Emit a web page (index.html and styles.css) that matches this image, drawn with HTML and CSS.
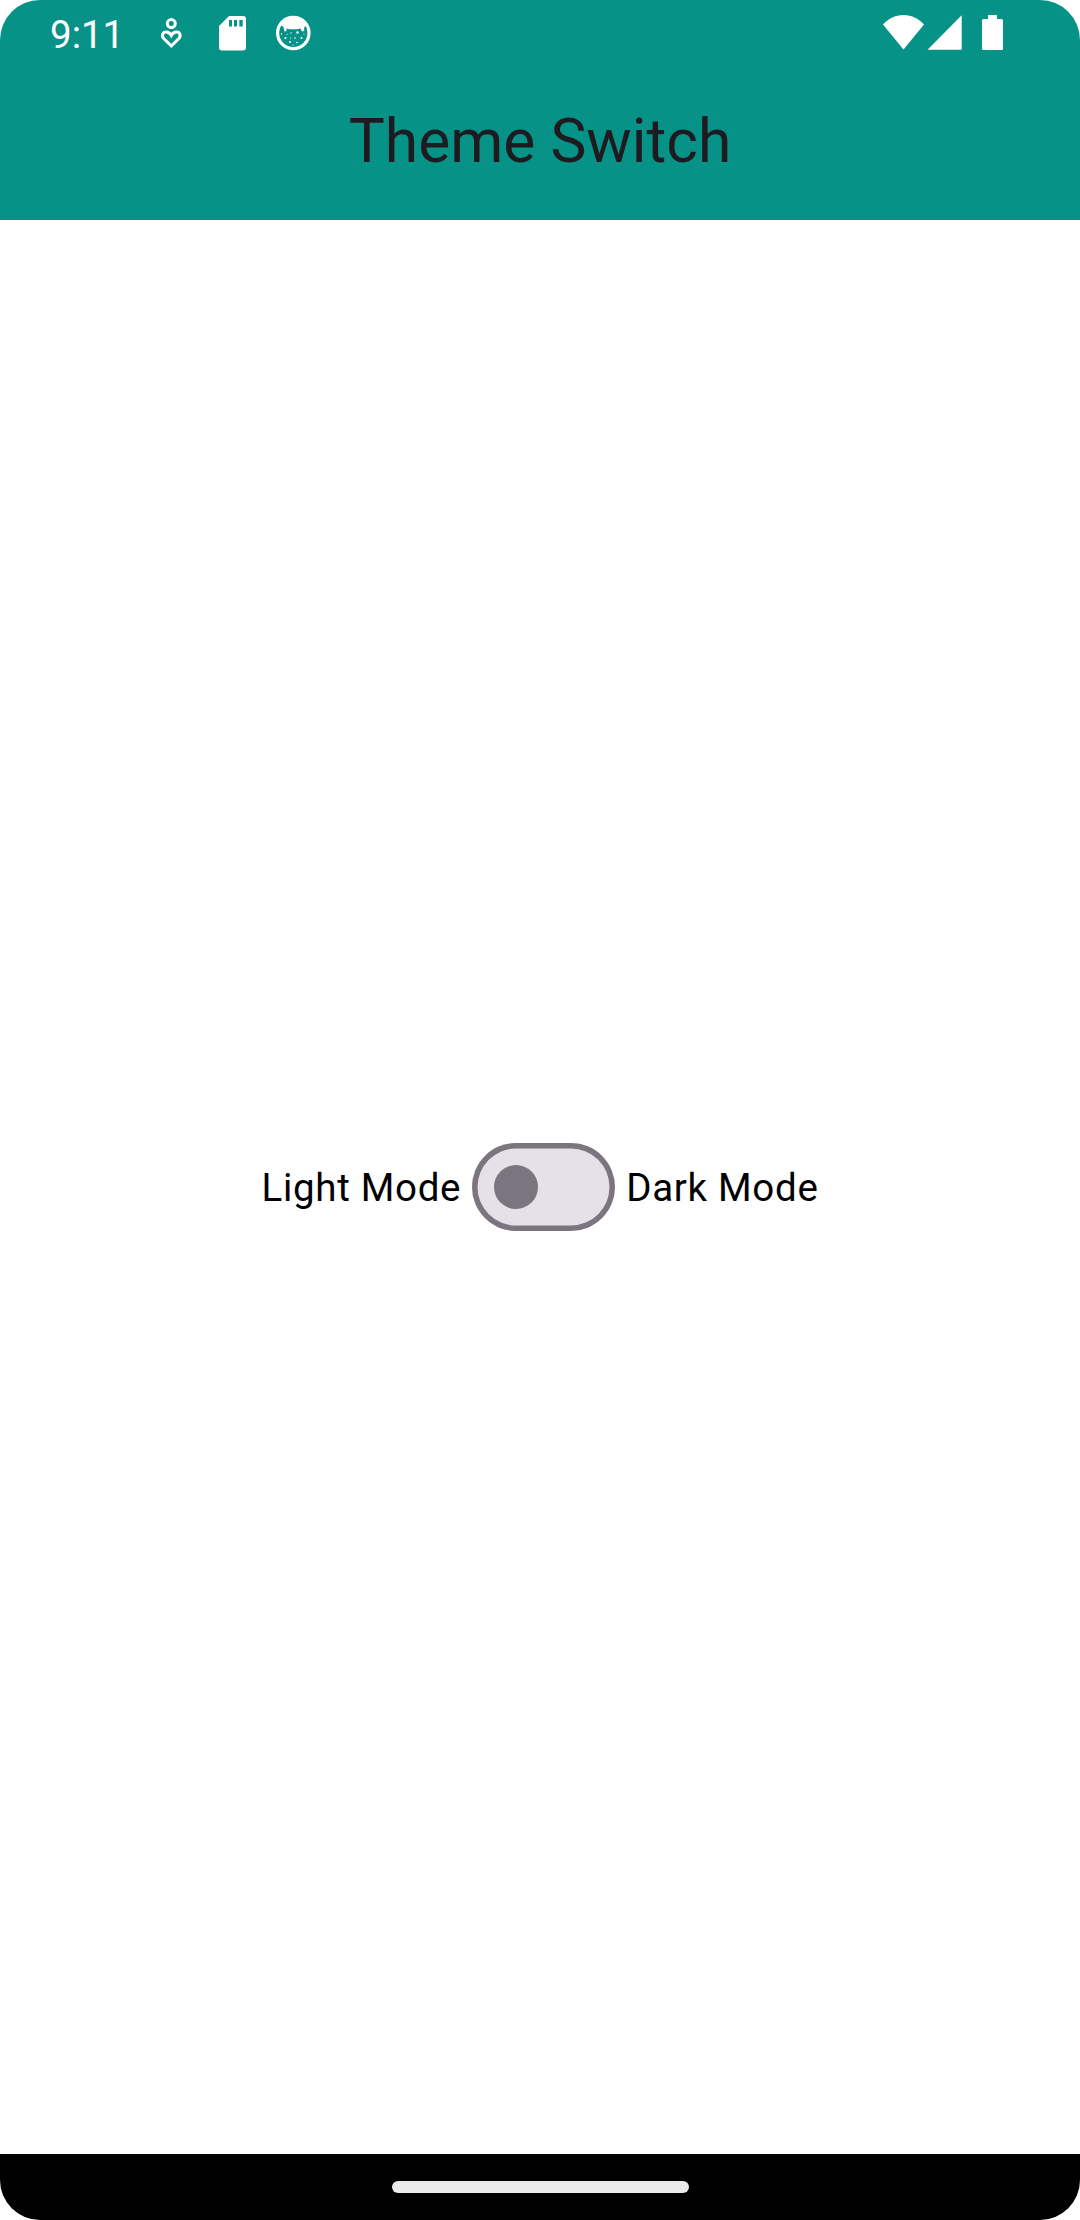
FILE: index.html
```html
<!DOCTYPE html>
<html lang="en">
<head>
<meta charset="utf-8">
<title>Theme Switch</title>
<link rel="stylesheet" href="styles.css">
</head>
<body>
<div class="screen">
  <header class="app-bar">
    <div class="status-bar">
      <span class="clock">9:11</span>
      <svg class="notifications" width="170" height="66" viewBox="150 0 170 66">
        <g fill="none" stroke="#fff" stroke-width="3">
          <circle cx="171.3" cy="23.6" r="4"/>
          <path d="M171.3 46 L164 38.8 C161.2 36 162.4 32 166 32 C168.6 32 170.4 33.8 171.3 35.4 C172.2 33.8 174 32 176.6 32 C180.2 32 181.4 36 178.6 38.8 Z"/>
        </g>
        <path fill="#fff" fill-rule="evenodd" d="M229 16H243a3 3 0 0 1 3 3V47.500a3 3 0 0 1-3 3H222a3 3 0 0 1-3-3V26ZM229 20v6.500h3V20ZM234 20v6.500h3V20ZM239.300 20v6.500h3.400V20Z"/>
        <circle cx="293.300" cy="33" r="15.700" fill="none" stroke="#fff" stroke-width="3.200"/>
        <path fill="#fff" d="M279 25C283 18 289 16 293.300 16S304 18 308 25L305.500 26L304 28L304.300 31L302 31.500L300.500 28.500L297 29.200H289.500L286.500 28.500L286.500 31L284.500 31.500L283.500 27L281.500 25.500Z"/>
        <g fill="#fff">
          <circle cx="285.500" cy="38" r="1.100"/><circle cx="297.500" cy="32.500" r="1.200"/><circle cx="291" cy="33" r=".7"/>
          <circle cx="295" cy="38" r=".8"/><circle cx="301.500" cy="38" r="1"/><circle cx="290" cy="42" r=".9"/>
          <circle cx="297" cy="42.500" r=".8"/><circle cx="281.500" cy="34" r=".7"/><circle cx="287" cy="34.500" r=".6"/>
          <circle cx="304" cy="34" r=".6"/><circle cx="293" cy="45" r=".6"/><circle cx="290.500" cy="38" r=".6"/>
        </g>
      </svg>
      <svg class="system-icons" width="130" height="66" viewBox="880 0 130 66" fill="#fff">
        <path d="M883 24.500C888 19 895 15 903.500 15S919 19 924 24.500L903.500 49.500Z"/>
        <path d="M961.700 15.300V49.700H927.500Z"/>
        <path d="M988 15h9v4h4.500q1.500 0 1.500 1.500v28q0 1.500-1.500 1.500h-18q-1.500 0-1.500-1.500v-28q0-1.500 1.500-1.500H988Z"/>
      </svg>
    </div>
    <h1 class="title">Theme Switch</h1>
  </header>
  <main class="content">
    <span class="label">Light Mode</span>
    <button class="switch" type="button" role="switch" aria-checked="false" aria-label="Dark mode"><span class="thumb"></span></button>
    <span class="label">Dark Mode</span>
  </main>
  <footer class="nav-bar"><div class="handle"></div></footer>
</div>
</body>
</html>
```
FILE: styles.css
```css
body {
  margin: 0;
  background: #fff;
  font-family: Roboto, sans-serif;
}
.screen {
  display: flex;
  flex-direction: column;
  width: 1080px;
  height: 2220px;
  border-radius: 40px;
  overflow: hidden;
}
.app-bar {
  height: 220px;
  background: #079288;
}
.status-bar {
  display: flex;
  align-items: center;
  height: 66px;
  padding: 0 70px 0 50px;
}
.clock {
  width: 100px;
  font-size: 38.5px;
  line-height: 46px;
  padding-top: 4px;
  color: #fff;
}
.system-icons {
  margin-left: auto;
}
.title {
  margin: 0;
  padding-top: 37px;
  text-align: center;
  font-size: 60.5px;
  line-height: 77px;
  font-weight: 400;
  color: #1d1b20;
}
.content {
  flex: 1;
  display: flex;
  align-items: center;
  justify-content: center;
  gap: 11px;
}
.label {
  font-size: 38.5px;
  line-height: 55px;
  letter-spacing: 0.7px;
  color: #000;
}
.switch {
  display: flex;
  align-items: center;
  box-sizing: border-box;
  width: 143px;
  height: 88px;
  padding: 0 0 0 22px;
  border: 0;
  border-radius: 44px;
  background: #e6e0e8;
  box-shadow: inset 0 0 0 5.5px #7b757f;
}
.thumb {
  width: 44px;
  height: 44px;
  border-radius: 50%;
  background: #7b757f;
}
.nav-bar {
  display: flex;
  justify-content: center;
  box-sizing: border-box;
  height: 66px;
  padding-top: 27px;
  background: #000;
}
.handle {
  width: 297px;
  height: 12px;
  border-radius: 6px;
  background: #ebebeb;
}
```
